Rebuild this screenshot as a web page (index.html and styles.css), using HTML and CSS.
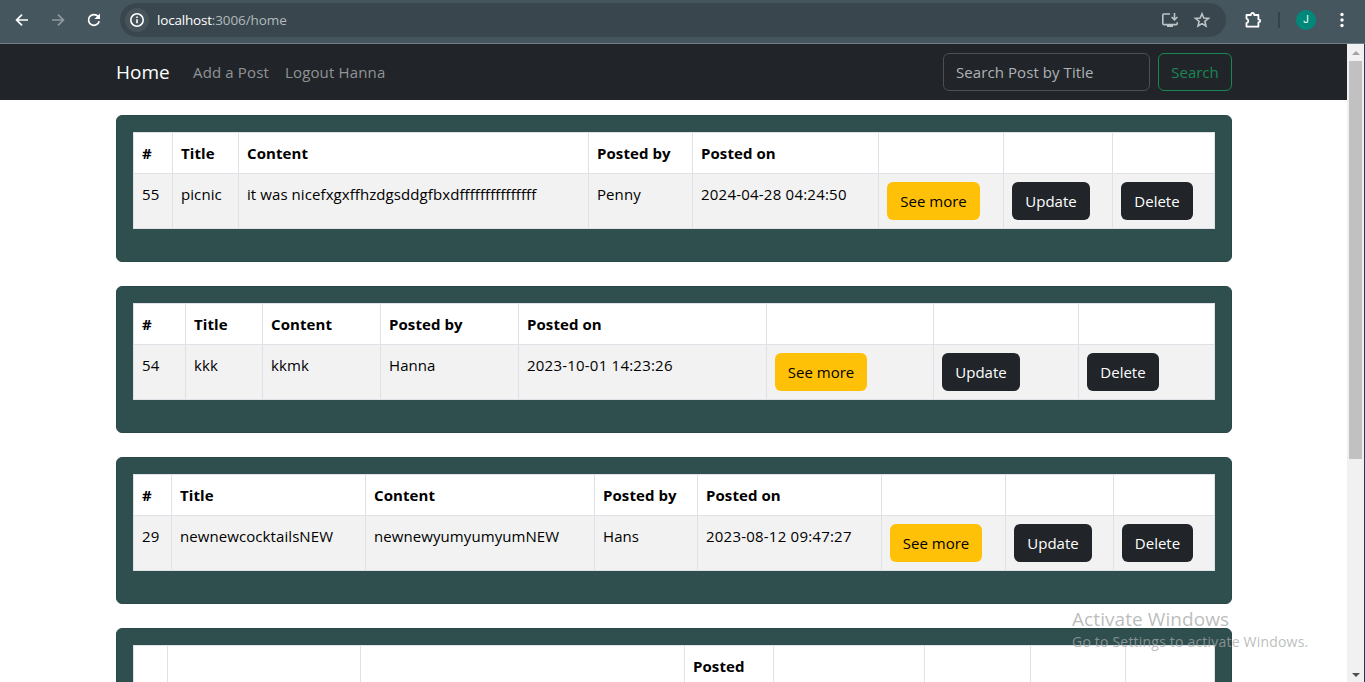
FILE: index.html
```html
<!DOCTYPE html>
<html lang="en">
<head>
<meta charset="utf-8">
<title>Home</title>
<link rel="stylesheet" href="styles.css">
</head>
<body>
<div class="window">
  <header class="toolbar">
    <svg class="nav-icon" viewBox="0 0 16 16"><path d="M14 8H3M8 2.6 2.6 8 8 13.4"/></svg>
    <svg class="nav-icon dim" viewBox="0 0 16 16"><path d="M2 8h11M8 2.6 13.4 8 8 13.4"/></svg>
    <svg class="nav-icon reload" viewBox="0 0 16 16"><path d="M13.2 9.2A5.4 5.4 0 1 1 12.2 4.6L13 5.5"/><path class="solid" d="M14 1.5v5.6H8.4z"/></svg>
    <div class="omnibox">
      <span class="info"><svg viewBox="0 0 16 16"><circle cx="8" cy="8" r="6.2"/><path d="M8 7.2v4M8 4.4v1.6"/></svg></span>
      <span class="url"><b>localhost</b>:3006/home</span>
      <svg class="box-icon install" viewBox="0 0 18 18"><path d="M9 3H2.8a1 1 0 0 0-1 1v8.6a1 1 0 0 0 1 1h12.4a1 1 0 0 0 1-1V11.300"/><path d="M13.500 2v6.400M10.600 6l2.900 2.900L16.400 6"/><path class="solid" d="M6 14h6v2H6z"/></svg>
      <svg class="box-icon" viewBox="0 0 18 18"><path d="M9 2.700l1.800 4.300 4.700.4-3.600 3 1.100 4.600L9 12.600 5 15l1.100-4.600-3.600-3 4.700-.4z"/></svg>
    </div>
    <svg class="puzzle" viewBox="0 0 18 18"><path d="M2.500 4h4.400C6.900 2.700 7.500 2 8.500 2s1.700.7 1.700 2h4.200v4.300c1.300.1 1.900.6 1.900 1.500s-.6 1.400-1.900 1.500v4.300H2.500v-3.400c1.200-.4 1.800-1.100 1.800-2.200S3.700 8 2.500 7.600z"/></svg>
    <span class="divider"></span>
    <span class="avatar">J</span>
    <svg class="dots" viewBox="0 0 4 16"><circle cx="2" cy="2.500" r="1.700"/><circle cx="2" cy="8" r="1.700"/><circle cx="2" cy="13.500" r="1.700"/></svg>
  </header>
  <div class="viewport">
    <div class="page">
      <nav class="navbar">
        <a class="brand">Home</a>
        <a class="link add">Add a Post</a>
        <a class="link logout">Logout Hanna</a>
        <div class="search-field">Search Post by Title</div>
        <button class="search-btn">Search</button>
      </nav>
      <main class="posts">
        <section class="card">
          <table class="t1">
            <colgroup><col><col><col><col><col><col><col><col></colgroup>
            <tr><th>#</th><th>Title</th><th>Content</th><th>Posted by</th><th>Posted on</th><th></th><th></th><th></th></tr>
            <tr class="row"><td>55</td><td>picnic</td><td>it was nicefxgxffhzdgsddgfbxdfffffffffffffff</td><td>Penny</td><td class="date">2024-04-28 04:24:50</td><td><button class="btn more">See more</button></td><td><button class="btn update">Update</button></td><td><button class="btn delete">Delete</button></td></tr>
          </table>
        </section>
        <section class="card">
          <table class="t2">
            <colgroup><col><col><col><col><col><col><col><col></colgroup>
            <tr><th>#</th><th>Title</th><th>Content</th><th>Posted by</th><th>Posted on</th><th></th><th></th><th></th></tr>
            <tr class="row"><td>54</td><td>kkk</td><td>kkmk</td><td>Hanna</td><td class="date">2023-10-01 14:23:26</td><td><button class="btn more">See more</button></td><td><button class="btn update">Update</button></td><td><button class="btn delete">Delete</button></td></tr>
          </table>
        </section>
        <section class="card">
          <table class="t3">
            <colgroup><col><col><col><col><col><col><col><col></colgroup>
            <tr><th>#</th><th>Title</th><th>Content</th><th>Posted by</th><th>Posted on</th><th></th><th></th><th></th></tr>
            <tr class="row"><td>29</td><td>newnewcocktailsNEW</td><td>newnewyumyumyumNEW</td><td>Hans</td><td class="date">2023-08-12 09:47:27</td><td><button class="btn more">See more</button></td><td><button class="btn update">Update</button></td><td><button class="btn delete">Delete</button></td></tr>
          </table>
        </section>
        <section class="card">
          <table class="t4">
            <colgroup><col><col><col><col><col><col><col><col></colgroup>
            <tr class="tall"><th></th><th></th><th></th><th>Posted</th><th></th><th></th><th></th><th></th></tr>
          </table>
        </section>
      </main>
    </div>
    <div class="scrollbar">
      <span class="arrow up"></span>
      <span class="thumb"></span>
      <span class="arrow down"></span>
    </div>
  </div>
  <aside class="watermark"><div class="wm-title">Activate Windows</div><div class="wm-text">Go to Settings to activate Windows.</div></aside>
</div>
</body>
</html>
```
FILE: styles.css
```css
* { box-sizing: border-box; }
body { margin: 0; overflow: hidden; background: #fff; font-family: "Open Sans", "Noto Sans", sans-serif; font-size: 15px; color: #000; }
button { font: inherit; letter-spacing: 0; }
.window { position: relative; width: 1365px; height: 682px; display: flex; flex-direction: column; overflow: hidden; }

.toolbar { flex: none; height: 44px; background: #46565f; border-bottom: 1px solid #6e7c84; display: flex; align-items: center; padding: 0 0 3px 14px; }
.toolbar svg { fill: none; stroke: #fff; stroke-width: 1.700; flex: none; }
.toolbar svg .solid { fill: #fff; stroke: none; }
.nav-icon { width: 16px; height: 16px; margin-right: 20px; }
.toolbar .dim { stroke: #8f9aa0; }
.nav-icon.reload { margin-right: 18px; }
.omnibox { width: 1106px; height: 34px; border-radius: 17px; background: #39464d; display: flex; align-items: center; padding: 0 15px 0 5px; }
.info { width: 24px; height: 24px; border-radius: 50%; background: #46535a; display: flex; align-items: center; justify-content: center; }
.info svg { width: 16px; height: 16px; stroke-width: 1.600; }
.url { flex: 1; margin-left: 8px; font-size: 13.500px; letter-spacing: -0.1px; color: #b2babd; }
.url b { font-weight: 400; color: #fff; letter-spacing: -0.2px; }
.box-icon { width: 18px; height: 18px; }
.toolbar .box-icon { stroke: #bdc4c7; stroke-width: 1.600; }
.toolbar .box-icon .solid { fill: #bdc4c7; }
.install { margin-right: 14px; }
.puzzle { width: 18px; height: 18px; margin-left: 18px; }
.toolbar .puzzle { stroke-width: 1.800; stroke-linejoin: round; }
.divider { width: 2px; height: 16px; background: #35434b; margin-left: 16px; }
.avatar { width: 20px; height: 20px; border-radius: 50%; background: #00897b; color: #fff; font: 10px/20px Roboto, sans-serif; text-align: center; margin-left: 16px; }
.dots { width: 4px; height: 16px; margin-left: 24px; }
.toolbar .dots { fill: #fff; stroke: none; }

.viewport { flex: 1; display: flex; min-height: 0; }
.page { width: 1347px; height: 638px; overflow: hidden; }
.navbar { height: 56px; background: #212529; display: flex; align-items: center; padding: 0 115px 0 116px; white-space: nowrap; }
.brand { width: 77px; color: #fff; font-size: 19px; }
.link { color: #919396; letter-spacing: 0.15px; }
.add { width: 92px; }
.logout { flex: 1; }
.search-field { width: 207px; height: 38px; border: 1px solid #495057; border-radius: 6px; padding-left: 12px; line-height: 36px; color: #aeb2b5; letter-spacing: 0.08px; }
.search-btn { width: 74px; height: 38px; margin-left: 8px; border: 1px solid #198754; border-radius: 6px; background: none; color: #198754; padding: 0; }

.posts { padding: 15px 115px 0 116px; display: flex; flex-direction: column; gap: 24px; }
.card { height: 147px; flex: none; background: #2f4f4f; border: 1px solid #2b4747; border-radius: 6px; padding: 16px; }
table { width: 1082px; table-layout: fixed; border-collapse: collapse; background: #fff; }
th, td { border: 1px solid #dee2e6; text-align: left; vertical-align: top; padding: 8px 0 0 8px; line-height: 24px; white-space: nowrap; }
th { font-weight: 700; height: 41px; letter-spacing: 0.08px; }
td { height: 55px; letter-spacing: 0.08px; }
.date { letter-spacing: 0.22px; }
.row { background: #f2f2f2; }
.tall th { height: 65px; }
.btn { display: block; height: 38px; border: 0; border-radius: 6px; padding: 0; background: #212529; color: #fff; }
.more { width: 93px; background: #ffc107; color: #000; }
.update { width: 78px; }
.delete { width: 72px; }
.t1 col:nth-child(1) { width: 39px; }
.t1 col:nth-child(2) { width: 66px; }
.t1 col:nth-child(3) { width: 350px; }
.t1 col:nth-child(4) { width: 104px; }
.t1 col:nth-child(5) { width: 186px; }
.t1 col:nth-child(6) { width: 125px; }
.t1 col:nth-child(7) { width: 109px; }
.t2 col:nth-child(1) { width: 52px; }
.t2 col:nth-child(2) { width: 77px; }
.t2 col:nth-child(3) { width: 118px; }
.t2 col:nth-child(4) { width: 138px; }
.t2 col:nth-child(5) { width: 248px; }
.t2 col:nth-child(6) { width: 167px; }
.t2 col:nth-child(7) { width: 145px; }
.t3 col:nth-child(1) { width: 38px; }
.t3 col:nth-child(2) { width: 194px; }
.t3 col:nth-child(3) { width: 229px; }
.t3 col:nth-child(4) { width: 103px; }
.t3 col:nth-child(5) { width: 184px; }
.t3 col:nth-child(6) { width: 124px; }
.t3 col:nth-child(7) { width: 108px; }
.t2 .more, .t3 .more { width: 92px; }
.t3 .delete { width: 71px; }
.t4 col:nth-child(1) { width: 34px; }
.t4 col:nth-child(2) { width: 193px; }
.t4 col:nth-child(3) { width: 324px; }
.t4 col:nth-child(4) { width: 89px; }
.t4 col:nth-child(5) { width: 151px; }
.t4 col:nth-child(6) { width: 106px; }
.t4 col:nth-child(7) { width: 95px; }

.scrollbar { width: 18px; background: #f1f1f1; border-right: 1px solid #1d3a5c; display: flex; flex-direction: column; align-items: center; }
.arrow { border: 4px solid transparent; width: 8px; height: 4px; }
.up { border-top: 0; border-bottom-color: #a3a3a3; margin-top: 7px; }
.thumb { width: 13px; height: 398px; margin-top: 6px; background: #c1c1c1; }
.down { border-bottom: 0; border-top-color: #505050; margin-top: auto; margin-bottom: 5px; }

.watermark { position: absolute; left: 1072px; top: 606px; color: rgba(165, 167, 167, 0.75); white-space: nowrap; }
.wm-title { font-size: 19px; line-height: 26px; letter-spacing: 0.08px; }
.wm-text { font-size: 14px; line-height: 20px; letter-spacing: 0.2px; }
```
